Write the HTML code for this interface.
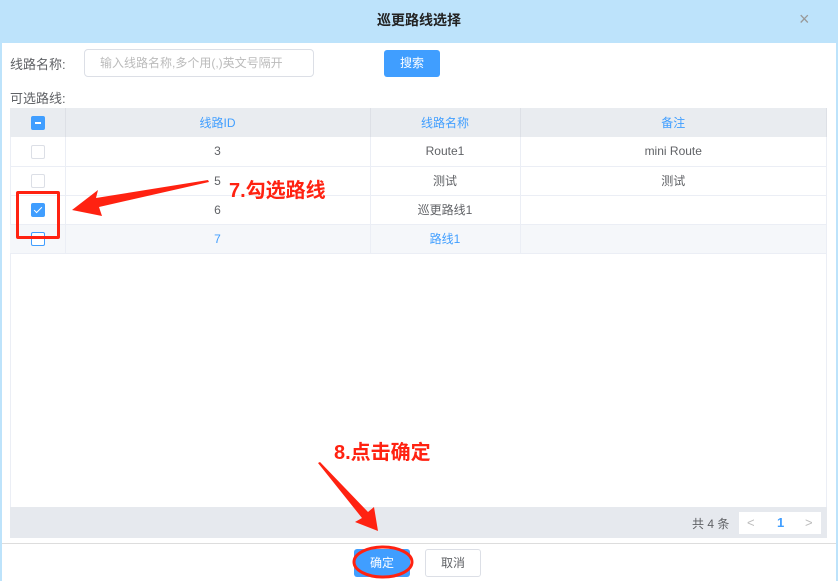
<!DOCTYPE html><html><head><meta charset="utf-8"><style>
*{box-sizing:border-box;margin:0;padding:0}
body{width:838px;height:581px;background:#bde3fb;font-family:"Liberation Sans","Noto Sans CJK SC",sans-serif;font-size:12px;color:#606266;position:relative;overflow:hidden}
.abs{position:absolute}
.main{left:2px;top:43px;width:834px;height:538px;background:#fff}
.cb{position:absolute;width:14px;height:14px;border:1px solid #dcdfe6;border-radius:2px;background:#fff;left:31px}
table{border-collapse:collapse;position:absolute;left:10px;top:108px;width:817px}
td{height:29px;text-align:center;border-right:1px solid #ebeef5;border-bottom:1px solid #ebeef5;font-size:12px;color:#606266}
th{height:29px;background:#e9ecf0;color:#409eff;font-weight:normal;font-size:12px;border-right:1px solid #dde0e6}
.hov td{background:#f5f7fa;color:#409eff}
.red{color:#f21;font-size:20px;font-weight:bold}
</style></head><body>
<div class="abs" style="left:0;top:0;width:838px;height:43px;text-align:center;line-height:40px;font-size:14px;font-weight:bold;color:#222">巡更路线选择</div>
<div class="abs" style="left:799px;top:9px;font-size:18px;color:#999">×</div>
<div class="abs main"></div>
<div class="abs" style="left:10px;top:54px;font-size:13px;color:#606266">线路名称:</div>
<div class="abs" style="left:84px;top:49px;width:230px;height:28px;border:1px solid #dcdfe6;border-radius:4px;padding-left:15px;line-height:26px;color:#bbb">输入线路名称,多个用(,)英文号隔开</div>
<div class="abs" style="left:384px;top:50px;width:56px;height:27px;background:#409eff;border-radius:3px;color:#fff;text-align:center;line-height:27px">搜索</div>
<div class="abs" style="left:10px;top:88px;font-size:13px">可选路线:</div>
<div class="abs" style="left:10px;top:108px;width:817px;height:430px;border:1px solid #ebeef5;border-top:none"></div>
<table>
<tr><th style="width:55px"></th><th style="width:305px">线路ID</th><th style="width:150px">线路名称</th><th>备注</th></tr>
<tr><td></td><td>3</td><td>Route1</td><td>mini Route</td></tr>
<tr><td></td><td>5</td><td>测试</td><td>测试</td></tr>
<tr><td></td><td>6</td><td>巡更路线1</td><td></td></tr>
<tr class="hov"><td></td><td>7</td><td>路线1</td><td></td></tr>
</table>
<div class="cb" style="top:116px;background:#409eff;border-color:#409eff"><div style="position:absolute;left:3px;top:5px;width:6px;height:2px;background:#fff"></div></div>
<div class="cb" style="top:145px"></div>
<div class="cb" style="top:174px"></div>
<div class="cb" style="top:203px;background:#409eff;border-color:#409eff"><div style="position:absolute;left:4px;top:1px;width:4px;height:8px;border:solid #fff;border-width:0 1px 1px 0;transform:rotate(45deg)"></div></div>
<div class="cb" style="top:232px;border-color:#409eff"></div>
<div class="abs" style="left:10px;top:507px;width:817px;height:31px;background:#e6e9ee"></div>
<div class="abs" style="left:692px;top:515px;color:#606266">共 4 条</div>
<div class="abs" style="left:739px;top:512px;width:82px;height:22px;background:#fff;font-size:13px;line-height:22px"><span style="position:absolute;left:8px;color:#bbb">&lt;</span><span style="position:absolute;left:38px;color:#409eff;font-weight:bold">1</span><span style="position:absolute;left:66px;color:#bbb">&gt;</span></div>
<div class="abs" style="left:2px;top:543px;width:834px;height:1px;background:#ddd"></div>
<div class="abs" style="left:354px;top:549px;width:56px;height:28px;background:#409eff;border-radius:3px;color:#fff;text-align:center;line-height:28px">确定</div>
<div class="abs" style="left:425px;top:549px;width:56px;height:28px;border:1px solid #dcdfe6;border-radius:3px;text-align:center;line-height:26px">取消</div>
<div class="abs red" style="left:229px;top:174px">7.勾选路线</div>
<div class="abs red" style="left:334px;top:436px">8.点击确定</div>
<div class="abs" style="left:16px;top:191px;width:44px;height:48px;border:3px solid #f21;border-radius:2px"></div>
<svg class="abs" style="left:0;top:0" width="838" height="581">
<polygon points="208,180 96,198 98,190 72,210 102,216 99,207 209,182" fill="#f21"/>
<polygon points="318,463 362,518 355,522 378,531 374,507 368,512 320,462" fill="#f21"/>
<ellipse cx="383" cy="562" rx="29" ry="15" fill="none" stroke="#f21" stroke-width="3"/>
</svg>
</body></html>
